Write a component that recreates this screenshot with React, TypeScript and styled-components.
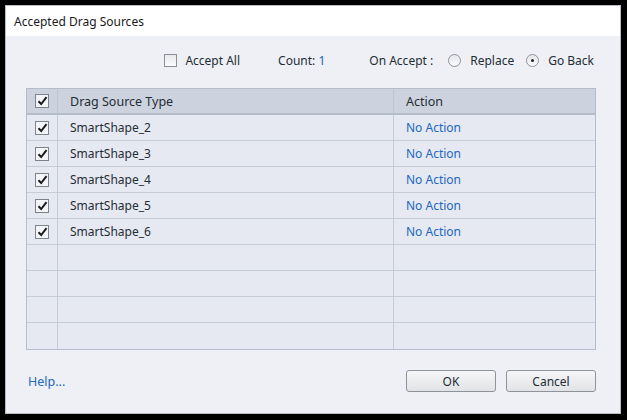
import React from "react";
import styled, { createGlobalStyle } from "styled-components";

const Global = createGlobalStyle`
  html, body { margin: 0; padding: 0; background: #000; }
  body { width: 627px; height: 420px; overflow: hidden; }
  * { box-sizing: border-box; }
`;

const Frame = styled.div`
  width: 627px;
  height: 420px;
  background: #000;
  padding: 5px 6px 6px 5px;
  display: flex;
`;

const Dialog = styled.div`
  flex: 1;
  display: flex;
  flex-direction: column;
  background: #eef0f6;
  border: 1px solid #b9bcc4;
  font-family: "Noto Sans", "Open Sans", sans-serif;
  font-size: 12px;
  color: #1f2d35;
`;

const TitleBar = styled.div`
  height: 30px;
  background: #fff;
  display: flex;
  align-items: center;
  padding-left: 8px;
  font-size: 12px;
  color: #1a1a1a;
`;

const Body = styled.div`
  flex: 1;
  display: flex;
  flex-direction: column;
  padding: 0 24px 0 20px;
`;

const TopRow = styled.div`
  height: 52px;
  display: flex;
  align-items: center;
  justify-content: flex-end;
  padding-right: 2px;
  padding-bottom: 4px;
`;

const Group = styled.label<{ $ml?: number }>`
  display: flex;
  align-items: center;
  margin-left: ${(p) => p.$ml ?? 0}px;
  white-space: nowrap;
`;

const Box = styled.span<{ $checked?: boolean }>`
  width: 13px;
  height: 13px;
  border: 1px solid #8a8f98;
  background: ${(p) => (p.$checked ? "#f3f4f7" : "linear-gradient(#e6e8ec, #fafbfc)")};
  display: inline-flex;
  align-items: center;
  justify-content: center;
  margin-right: 8px;
`;

const Radio = styled.span<{ $on?: boolean }>`
  width: 13px;
  height: 13px;
  border-radius: 50%;
  border: 1px solid #8f949c;
  background: linear-gradient(#e4e6ea, #fbfbfc);
  display: inline-flex;
  align-items: center;
  justify-content: center;
  margin-right: 9px;
  &::after {
    content: "";
    display: ${(p) => (p.$on ? "block" : "none")};
    width: 3px;
    height: 3px;
    border-radius: 50%;
    background: #222;
  }
`;

const Blue = styled.span`
  color: #2267c0;
`;

const Table = styled.div`
  display: grid;
  grid-template-columns: 30px 336px 1fr;
  border: 1px solid #b6bccb;
  background: #e6e9f1;
`;

const HeadCell = styled.div<{ $first?: boolean }>`
  height: 26px;
  background: #cdd3de;
  border-bottom: 2px solid #b4bbc9;
  border-left: ${(p) => (p.$first ? "none" : "1px solid #bdc3d0")};
  display: flex;
  align-items: center;
  padding-left: ${(p) => (p.$first ? "0" : "12px")};
  justify-content: ${(p) => (p.$first ? "center" : "flex-start")};
  font-size: 12.5px;
`;

const Cell = styled.div<{ $first?: boolean; $link?: boolean }>`
  height: 26px;
  border-bottom: 1px solid #c7ccd9;
  border-left: ${(p) => (p.$first ? "none" : "1px solid #c7ccd9")};
  display: flex;
  align-items: center;
  padding-left: ${(p) => (p.$first ? "0" : "12px")};
  justify-content: ${(p) => (p.$first ? "center" : "flex-start")};
  color: ${(p) => (p.$link ? "#2267c0" : "#1f2d35")};
  &:nth-last-child(-n + 3) {
    border-bottom: none;
  }
`;

const CellBox = styled(Box)`
  margin-right: 0;
  width: 14px;
  height: 14px;
  background: #f4f5f8;
  border-color: #7d828b;
`;

const Footer = styled.div`
  flex: 1;
  display: flex;
  align-items: center;
  justify-content: space-between;
  padding: 0 0 1px 2px;
`;

const HelpLink = styled.a`
  color: #2267c0;
  font-size: 12.5px;
  text-decoration: none;
`;

const Buttons = styled.div`
  display: flex;
  gap: 10px;
`;

const Button = styled.button`
  width: 90px;
  height: 22px;
  border: 1px solid #8e9299;
  border-radius: 3px;
  background: linear-gradient(#f6f6f7, #e2e3e6);
  font-family: "Noto Sans", "Open Sans", sans-serif;
  font-size: 12px;
  color: #1f2d35;
  padding: 0;
`;

const Check = () => (
  <svg width="11" height="10" viewBox="0 0 11 10">
    <path d="M1.5 5.2 L4.2 8 L9.5 1.2" fill="none" stroke="#1b1b1b" strokeWidth="2" />
  </svg>
);

const rows = ["SmartShape_2", "SmartShape_3", "SmartShape_4", "SmartShape_5", "SmartShape_6", "", "", "", ""];

export default function App() {
  return (
    <>
      <Global />
      <Frame>
        <Dialog>
          <TitleBar>Accepted Drag Sources</TitleBar>
          <Body>
            <TopRow>
              <Group>
                <Box />
                Accept All
              </Group>
              <Group $ml={38}>
                Count:&nbsp;<Blue>1</Blue>
              </Group>
              <Group $ml={44}>On Accept :</Group>
              <Group $ml={15}>
                <Radio />
                Replace
              </Group>
              <Group $ml={12}>
                <Radio $on />
                Go Back
              </Group>
            </TopRow>
            <Table>
              <HeadCell $first>
                <CellBox $checked>
                  <Check />
                </CellBox>
              </HeadCell>
              <HeadCell>Drag Source Type</HeadCell>
              <HeadCell>Action</HeadCell>
              {rows.map((r, i) => (
                <React.Fragment key={i}>
                  <Cell $first>
                    {r && (
                      <CellBox $checked>
                        <Check />
                      </CellBox>
                    )}
                  </Cell>
                  <Cell>{r}</Cell>
                  <Cell $link>{r ? "No Action" : ""}</Cell>
                </React.Fragment>
              ))}
            </Table>
            <Footer>
              <HelpLink href="#">Help...</HelpLink>
              <Buttons>
                <Button>OK</Button>
                <Button>Cancel</Button>
              </Buttons>
            </Footer>
          </Body>
        </Dialog>
      </Frame>
    </>
  );
}
